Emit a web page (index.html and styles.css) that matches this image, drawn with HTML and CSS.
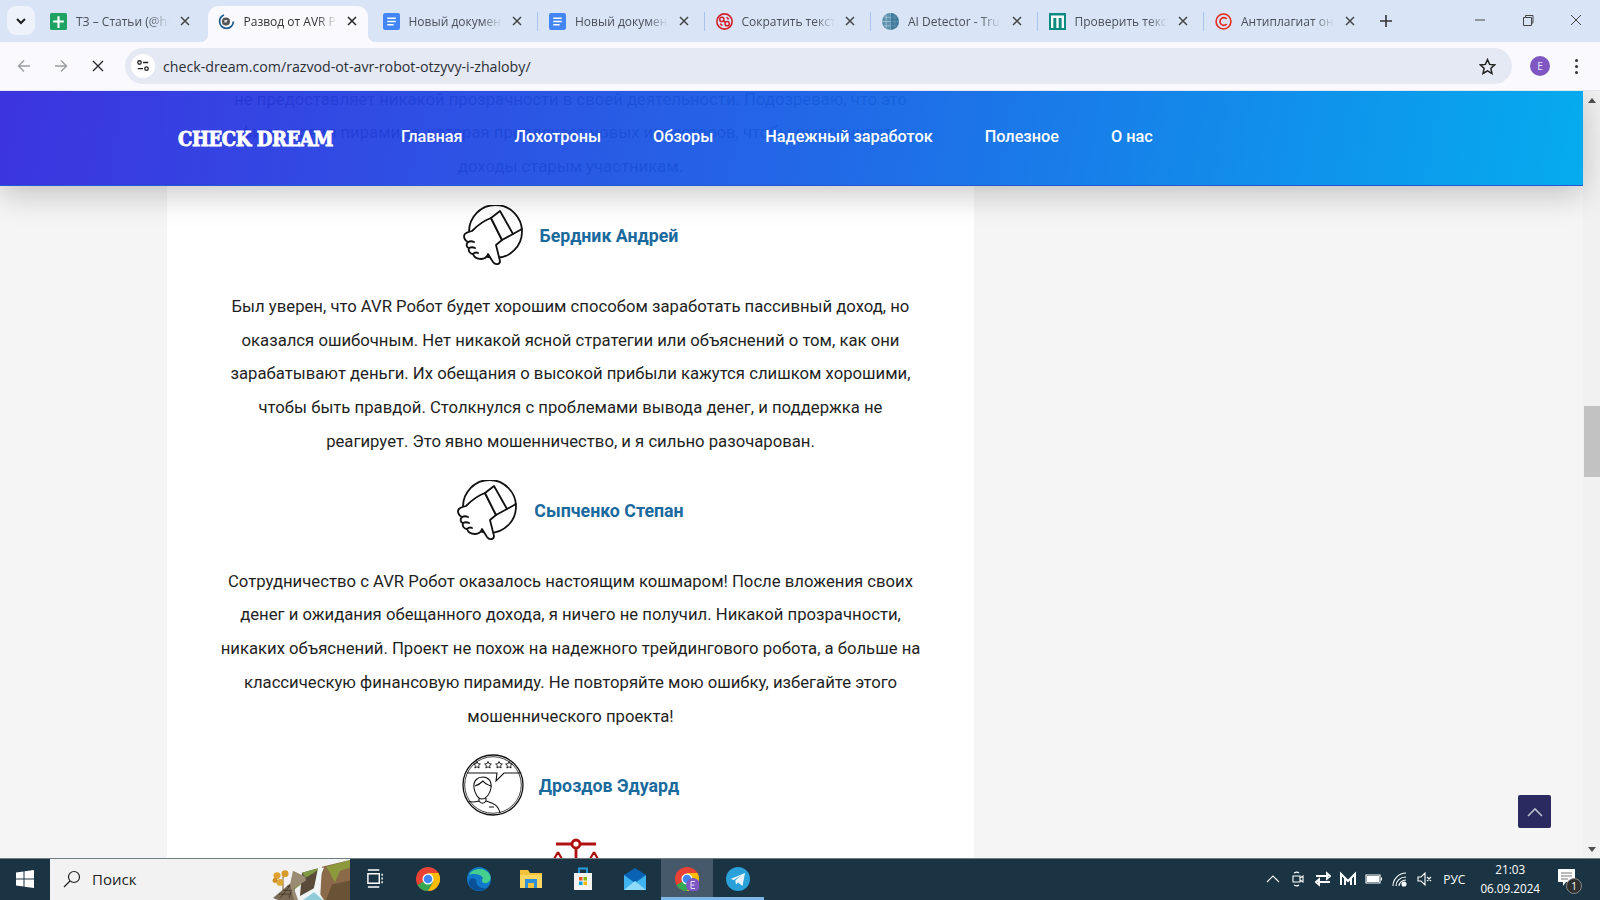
FILE: index.html
```html
<!DOCTYPE html>
<html lang="ru">
<head>
<meta charset="utf-8">
<title>Развод от AVR Робот</title>
<link rel="stylesheet" href="styles.css">
</head>
<body>
<svg class="defs" width="0" height="0" aria-hidden="true">
  <symbol id="thumb" viewBox="0 0 62 62">
    <g fill="none" stroke="#111" stroke-width="1.800" stroke-linecap="round" stroke-linejoin="round">
      <circle cx="32.500" cy="26.500" r="26.500"/>
      <path fill="#fff" d="M28 13C22 15 15 20 9 26 5 27 1 28 1 31 1 34 3 36 5 37 3 39 3 42 6 43 5 46 7 49 10 49 11 52 14 54 18 54 21 54 24 52 25 49L30 57C32 60 37 60 37 56L33 40 39 35Z"/>
      <path fill="#fff" d="M28 13L37 6 50 29 39 35Z"/>
      <path d="M50 29L59 24M5 37C7 36 9 36 11 37M6 43C8 42 10 42 12 43M10 49C11 48 13 47 15 48"/>
    </g>
  </symbol>
  <symbol id="review" viewBox="0 0 62 62">
    <g fill="none" stroke="#111">
      <circle cx="31" cy="31" r="30" stroke-width="1.300"/>
      <circle cx="31" cy="31" r="28.300" stroke-width=".8"/>
      <path stroke-width="1.100" d="M5 19H35L34 27 42 19H58"/>
      <path stroke-width=".9" d="M15 7.500l1 2.200 2.400.3-1.800 1.600.5 2.400-2.100-1.200-2.100 1.200.5-2.400-1.800-1.600 2.400-.3zM26 7.500l1 2.200 2.400.3-1.800 1.600.5 2.400-2.100-1.200-2.100 1.200.5-2.400-1.800-1.600 2.400-.3zM37 7.500l1 2.200 2.400.3-1.800 1.600.5 2.400-2.100-1.200-2.100 1.200.5-2.400-1.800-1.600 2.400-.3zM47 7.500l1 2.200 2.400.3-1.800 1.600.5 2.400-2.100-1.200-2.100 1.200.5-2.400-1.800-1.600 2.400-.3z"/>
      <path stroke-width="1.100" d="M12 34C11 26 16 23 21 23 26 23 30 27 29 34 28 40 24 45 20 45 16 45 13 40 12 34ZM13 32C16 31 19 29 21 27 23 30 26 31 29 32M17 44V47C13 48 10 49 7 47M24 44V47C30 49 36 50 38 59M17 47C19 50 22 50 24 47M27 53H32"/>
    </g>
  </symbol>
</svg>

<header class="tabstrip">
  <button class="tab-list"><svg width="12" height="8" viewBox="0 0 12 8"><path d="M2 2l4 4 4-4" fill="none" stroke="#1c1c1c" stroke-width="2"/></svg></button>
  <div class="tab">
    <svg class="favicon" viewBox="0 0 16 16"><rect width="16" height="16" rx="1.500" fill="#1ea362"/><path d="M7 3h2v4h4v2H9v5H7V9H3V7h4z" fill="#fff"/></svg>
    <span class="tab-title">ТЗ – Статьи (@hea</span>
    <svg class="tab-close" viewBox="0 0 10 10"><path d="M1 1l8 8M9 1L1 9"/></svg>
  </div>
  <div class="tab active">
    <svg class="favicon" viewBox="0 0 16 16"><circle cx="8" cy="8" r="6.500" fill="none" stroke="#1b5a8c" stroke-width="1.600" stroke-dasharray="28 13"/><circle cx="7.500" cy="8" r="3.800" fill="#555"/><path d="M6 6.500l3 0-1 2.500-2 0z" fill="#ddd"/></svg>
    <span class="tab-title">Развод от AVR Робот</span>
    <svg class="tab-close" viewBox="0 0 10 10"><path d="M1 1l8 8M9 1L1 9"/></svg>
  </div>
  <div class="tab sep">
    <svg class="favicon" viewBox="0 0 16 16"><rect width="16" height="16" rx="2" fill="#4285f4"/><path d="M4 5h8M4 8h8M4 11h6" stroke="#fff" stroke-width="1.500"/></svg>
    <span class="tab-title">Новый документ</span>
    <svg class="tab-close" viewBox="0 0 10 10"><path d="M1 1l8 8M9 1L1 9"/></svg>
  </div>
  <div class="tab sep">
    <svg class="favicon" viewBox="0 0 16 16"><rect width="16" height="16" rx="2" fill="#4285f4"/><path d="M4 5h8M4 8h8M4 11h6" stroke="#fff" stroke-width="1.500"/></svg>
    <span class="tab-title">Новый документ</span>
    <svg class="tab-close" viewBox="0 0 10 10"><path d="M1 1l8 8M9 1L1 9"/></svg>
  </div>
  <div class="tab sep">
    <svg class="favicon" viewBox="0 0 16 16"><circle cx="8" cy="8" r="7.200" fill="none" stroke="#d5202a" stroke-width="1.500"/><circle cx="5.500" cy="6" r="2" fill="none" stroke="#d5202a" stroke-width="1.400"/><circle cx="10.500" cy="10" r="2" fill="none" stroke="#d5202a" stroke-width="1.400"/><path d="M7 7.500l2 1M10 4l2 2M4 10l2 2" stroke="#d5202a" stroke-width="1.400"/></svg>
    <span class="tab-title">Сократить текст</span>
    <svg class="tab-close" viewBox="0 0 10 10"><path d="M1 1l8 8M9 1L1 9"/></svg>
  </div>
  <div class="tab sep">
    <svg class="favicon" viewBox="0 0 16 16"><circle cx="8" cy="8" r="8" fill="#5d8fae"/><path d="M8 0v16M4 2v12M12 2v12M0 8h16M2 4h12M2 12h12" stroke="#a9c6d6" stroke-width=".8"/><path d="M8 0a8 8 0 0 1 0 16z" fill="#2f6b8f" opacity=".6"/></svg>
    <span class="tab-title">AI Detector - TruthS</span>
    <svg class="tab-close" viewBox="0 0 10 10"><path d="M1 1l8 8M9 1L1 9"/></svg>
  </div>
  <div class="tab sep">
    <svg class="favicon" viewBox="0 0 16 16"><rect width="16" height="16" fill="#0f8a80"/><path d="M3 14V3.500h10V14M8 3.500V14" fill="none" stroke="#fff" stroke-width="2.200"/></svg>
    <span class="tab-title">Проверить текст</span>
    <svg class="tab-close" viewBox="0 0 10 10"><path d="M1 1l8 8M9 1L1 9"/></svg>
  </div>
  <div class="tab sep">
    <svg class="favicon" viewBox="0 0 16 16"><circle cx="8" cy="8" r="7" fill="none" stroke="#e5291f" stroke-width="1.500"/><path d="M11 5.600A3.600 3.600 0 1 0 11 10.400" fill="none" stroke="#e5291f" stroke-width="1.600"/></svg>
    <span class="tab-title">Антиплагиат онлайн</span>
    <svg class="tab-close" viewBox="0 0 10 10"><path d="M1 1l8 8M9 1L1 9"/></svg>
  </div>
  <svg class="new-tab" viewBox="0 0 12 12"><path d="M6 0v12M0 6h12"/></svg>
  <div class="window-controls">
    <svg viewBox="0 0 12 12"><path d="M1 6h10"/></svg>
    <svg viewBox="0 0 12 12"><path d="M1.500 3.500h8v8h-8zM3.500 3.500V1.500h7.500v7.500H9.500"/></svg>
    <svg viewBox="0 0 12 12"><path d="M1 1l10 10M11 1L1 11"/></svg>
  </div>
</header>

<nav class="toolbar">
  <svg class="tool dim" viewBox="0 0 14 14"><path d="M13 7H1.500M7 1.500L1.500 7 7 12.500"/></svg>
  <svg class="tool dim" viewBox="0 0 14 14"><path d="M1 7h11.500M7 1.500L12.500 7 7 12.500"/></svg>
  <svg class="tool stop" viewBox="0 0 14 14"><path d="M2 2l10 10M12 2L2 12"/></svg>
  <div class="omnibox">
    <span class="site-info"><svg viewBox="0 0 16 16"><circle cx="4" cy="4" r="2"/><path d="M8 4h6M2 11h6"/><circle cx="12" cy="11" r="2"/></svg></span>
    <span class="url">check-dream.com/razvod-ot-avr-robot-otzyvy-i-zhaloby/</span>
    <svg class="star" viewBox="0 0 16 16"><path d="M8 1.500l2 4.500 4.800.5-3.600 3.200 1 4.800L8 12l-4.200 2.500 1-4.800L1.200 6.500 6 6z"/></svg>
  </div>
  <span class="avatar">E</span>
  <span class="menu-dots"><i></i><i></i><i></i></span>
</nav>

<main class="viewport">
  <div class="page">
    <article class="article">
      <p class="review">не предоставляет никакой прозрачности в своей деятельности. Подозреваю, что это<br>финансовая пирамида, которая привлекает новых инвесторов, чтобы выплачивать<br>доходы старым участникам.</p>
      <h3 class="author"><svg class="author-icon"><use href="#thumb"/></svg>Бердник Андрей</h3>
      <p class="review">Был уверен, что AVR Робот будет хорошим способом заработать пассивный доход, но<br>оказался ошибочным. Нет никакой ясной стратегии или объяснений о том, как они<br>зарабатывают деньги. Их обещания о высокой прибыли кажутся слишком хорошими,<br>чтобы быть правдой. Столкнулся с проблемами вывода денег, и поддержка не<br>реагирует. Это явно мошенничество, и я сильно разочарован.</p>
      <h3 class="author"><svg class="author-icon"><use href="#thumb"/></svg>Сыпченко Степан</h3>
      <p class="review">Сотрудничество с AVR Робот оказалось настоящим кошмаром! После вложения своих<br>денег и ожидания обещанного дохода, я ничего не получил. Никакой прозрачности,<br>никаких объяснений. Проект не похож на надежного трейдингового робота, а больше на<br>классическую финансовую пирамиду. Не повторяйте мою ошибку, избегайте этого<br>мошеннического проекта!</p>
      <h3 class="author"><svg class="author-icon"><use href="#review"/></svg>Дроздов Эдуард</h3>
      <svg class="scales" viewBox="0 0 48 40"><g fill="none" stroke="#b01212" stroke-width="2.800"><path d="M4 6h40M24 10v30"/><path d="M6 14L1 23M6 14l5 9M42 14l-5 9M42 14l5 9" stroke-width="2.200"/><circle cx="24" cy="6" r="4" fill="#fff"/></g></svg>
    </article>
  </div>
  <div class="scrollbar">
    <span class="arrow up"></span>
    <span class="thumb"></span>
    <span class="arrow down"></span>
  </div>
  <div class="site-header">
    <span class="logo">CHECK DREAM</span>
    <ul class="site-nav">
      <li>Главная</li><li>Лохотроны</li><li>Обзоры</li><li>Надежный заработок</li><li>Полезное</li><li>О нас</li>
    </ul>
  </div>
  <a class="to-top"><svg viewBox="0 0 16 10"><path d="M1 9l7-7 7 7"/></svg></a>
</main>

<footer class="taskbar">
  <span class="start"><svg viewBox="0 0 18 18"><path d="M0 2.500L7.500 1.400V8.500H0zM8.500 1.300L18 0V8.500H8.500zM0 9.500H7.500V16.600L0 15.500zM8.500 9.500H18V18L8.500 16.700z" fill="#fff"/></svg></span>
  <div class="search">
    <svg class="lens" viewBox="0 0 18 18"><circle cx="11" cy="7" r="5.500"/><path d="M7 11l-6 6"/></svg>
    <span class="search-text">Поиск</span>
    <svg class="search-art" viewBox="0 0 80 42" preserveAspectRatio="none">
      <path d="M52 8L80 1V42H50z" fill="#8a6a48"/>
      <path d="M56 8L80 1V9L70 12 65 24 60 14z" fill="#8c9a3c"/>
      <path d="M56 42L62 26 80 22V42z" fill="#6a5236"/>
      <path d="M32 14L50 9 44 30 30 38z" fill="#5a4a3a"/>
      <path d="M32 14L50 9 44 14 36 19z" fill="#7f9a42"/>
      <path d="M48 9L54 9 46 28 48 33 54 42H34L44 30z" fill="#eef6f7"/>
      <path d="M33 42L44 34 53 42z" fill="#8fcbd8"/>
      <path d="M18 28L26 20 31 26 22 33z" fill="#7d9a3e"/>
      <path d="M3 40L20 25 25 28 24 42H8z" fill="#7a6a55"/>
      <path d="M10 40L21 26M19 40L23 27M9 36h12M13 32h9M17 28h6" stroke="#3f3223" stroke-width=".8" fill="none"/>
      <path d="M23 12L35 18 36 22 24 30 28 42H24L20 26z" fill="#9a8b75"/>
      <path d="M13 18v14" stroke="#7a5a28" stroke-width="1"/>
      <circle cx="7" cy="17" r="3.500" fill="#e0a030"/><circle cx="15" cy="15" r="3.500" fill="#d99a2a"/><circle cx="10" cy="24" r="3.500" fill="#e0a838"/><circle cx="5" cy="22" r="2.500" fill="#cf8e22"/>
    </svg>
  </div>
  <div class="task-icons">
    <span class="task"><svg viewBox="0 0 20 20"><path d="M2 1h12M2 19h12M2 5h12v10H2z" fill="none" stroke="#fff" stroke-width="1.500"/><path d="M17 5v2M17 9v2M17 13v2" stroke="#fff" stroke-width="1.500"/></svg></span>
    <span class="task"><svg class="big" viewBox="0 0 24 24"><circle cx="12" cy="12" r="12" fill="#ea4335"/><path d="M12 12L1.600 18A12 12 0 0 0 12 24L22.400 6H12z" fill="#34a853"/><path d="M12 24A12 12 0 0 0 22.400 6H12l5.200 9z" fill="#fbbc05"/><circle cx="12" cy="12" r="5.500" fill="#fff"/><circle cx="12" cy="12" r="4.300" fill="#4285f4"/></svg></span>
    <span class="task"><svg class="big" viewBox="0 0 24 24"><circle cx="12" cy="12" r="12" fill="#0f78c8"/><path d="M2 8C5 1 18-1 23 8c2 5-2 9-6 8-3-1-2-4-1-5C14 7 6 6 2 8z" fill="#45cf8f"/><path d="M9 13c0 6 5 9 10 8-3 3-13 5-17-4-1-4 3-8 7-4z" fill="#0b4f96"/></svg></span>
    <span class="task"><svg class="big" viewBox="0 0 24 24"><path d="M1 3h8l2 3h12v15H1z" fill="#f5c33b"/><path d="M1 8h22v13H1z" fill="#fbd660"/><path d="M6 12h12v9H6z" fill="#2e8fd8"/><path d="M9 16h6v5H9z" fill="#f5c33b"/></svg></span>
    <span class="task"><svg class="big" viewBox="0 0 24 24"><path d="M3 6h18v17H3z" fill="#f4f4f4"/><path d="M8 6V1.500h8V6" fill="none" stroke="#2a9de0" stroke-width="1.800"/><path d="M8 10h3.500v3.500H8z" fill="#f25022"/><path d="M12.500 10H16v3.500h-3.500z" fill="#7fba00"/><path d="M8 14.500h3.500V18H8z" fill="#00a4ef"/><path d="M12.500 14.500H16V18h-3.500z" fill="#ffb900"/></svg></span>
    <span class="task"><svg class="big" viewBox="0 0 24 24"><path d="M1 8h22v15H1z" fill="#3fb4ee"/><path d="M1 8l11-7 11 7-11 8z" fill="#0a62b4"/><path d="M1 23l11-9 11 9z" fill="#8fdcfa"/></svg></span>
    <span class="task running active"><svg class="big" viewBox="0 0 24 24"><circle cx="12" cy="12" r="12" fill="#ea4335"/><path d="M12 12L1.600 18A12 12 0 0 0 12 24L22.400 6H12z" fill="#34a853"/><path d="M12 24A12 12 0 0 0 22.400 6H12l5.200 9z" fill="#fbbc05"/><circle cx="12" cy="12" r="5.500" fill="#fff"/><circle cx="12" cy="12" r="4.300" fill="#4285f4"/><circle cx="18" cy="18" r="7" fill="#7e57c2"/><path d="M16 14.500h4M16 18h3.500M16 21.500h4M16 14.500v7" stroke="#e8dcff" stroke-width="1" fill="none"/></svg></span>
    <span class="task running"><svg class="big" viewBox="0 0 24 24"><circle cx="12" cy="12" r="12" fill="#2aa1da"/><path d="M4.500 12L19 6l-2.500 13-4.500-3.500-2 2-.7-4 6.200-5.500L8 13z" fill="#e9f5fb"/></svg></span>
  </div>
  <div class="tray">
    <svg class="tray-icon" viewBox="0 0 16 16"><path d="M2 11l6-6 6 6"/></svg>
    <svg class="tray-icon" viewBox="0 0 16 16"><path d="M3 5h7v6H3zM10 7l3-2v6l-3-2M4 2c2-1 4-1 5 0M4 14c2 1 4 1 5 0"/></svg>
    <svg class="tray-icon fat" viewBox="0 0 16 16"><path d="M1 5h12M15 5l-3-2.500v5zM15 11H3M1 11l3-2.500v5z"/></svg>
    <svg class="tray-icon fat" viewBox="0 0 16 16"><path d="M1 14V3l7 7 7-7v11M5 14V7M11 14V7"/></svg>
    <svg class="tray-icon wide" viewBox="0 0 18 12"><path d="M1 2h14v8H1zM16.500 4.500v3"/><path d="M2.500 3.500h11v5h-11z" fill="#fff"/></svg>
    <svg class="tray-icon" viewBox="0 0 16 16"><path d="M1 15C1 8 7 2 14 2M4 15c0-5 4-9 10-9M7 15c0-3 3-6 7-6"/><circle cx="12" cy="13" r="2" fill="#fff"/></svg>
    <svg class="tray-icon" viewBox="0 0 16 16"><path d="M1 6h3l4-4v12l-4-4H1zM10 6l4 4M14 6l-4 4"/></svg>
    <span class="lang">РУС</span>
    <span class="clock"><span>21:03</span><span>06.09.2024</span></span>
    <span class="notify"><svg viewBox="0 0 20 20"><path d="M1 1h17v13H9l-3 4v-4H1z" fill="#fff"/><path d="M4 5h11M4 8h11M4 11h7" stroke="#777" stroke-width="1"/></svg><b>1</b></span>
  </div>
</footer>
</body>
</html>
```
FILE: styles.css
```css
* { box-sizing: border-box; }
html, body { margin: 0; height: 100%; }
body {
  display: flex;
  flex-direction: column;
  height: 900px;
  overflow: hidden;
  font-family: Roboto, "Noto Sans", sans-serif;
  background: #f5f5f5;
}
.defs { position: absolute; }

/* tab strip */
.tabstrip {
  height: 42px;
  flex: none;
  display: flex;
  align-items: flex-start;
  padding: 6px 0 0 7px;
  background: #d9e5f7;
  font-family: "Open Sans", "Noto Sans", sans-serif;
}
.tab-list {
  width: 28px;
  height: 29px;
  margin-right: 3px;
  border: 0;
  padding: 0;
  border-radius: 9px;
  background: #edf2fb;
  display: flex;
  align-items: center;
  justify-content: center;
}
.tab {
  position: relative;
  width: 166.500px;
  height: 36px;
  padding: 0 15px 6px 12px;
  display: flex;
  align-items: center;
  flex: none;
}
.tab.sep::before {
  content: "";
  position: absolute;
  left: 0;
  top: 6px;
  height: 19px;
  width: 1px;
  background: #a9c4ee;
}
.tab.active + .tab.sep::before { display: none; }
.tab.active {
  width: 160px;
  margin: 0 3px;
  padding-left: 10px;
  padding-right: 11px;
  background: #f9f9fe;
  border-radius: 11px 11px 0 0;
}
.tab.active::before, .tab.active::after {
  content: "";
  position: absolute;
  bottom: 0;
  width: 8px;
  height: 8px;
}
.tab.active::before { left: -8px; background: radial-gradient(circle at 0 0, transparent 8px, #f9f9fe 8.500px); }
.tab.active::after { right: -8px; background: radial-gradient(circle at 100% 0, transparent 8px, #f9f9fe 8.500px); }
.favicon { width: 17px; height: 17px; flex: none; }
.tab-title {
  margin-left: 9px;
  width: 93px;
  font-size: 12px;
  color: #4a4f57;
  white-space: nowrap;
  overflow: hidden;
  -webkit-mask-image: linear-gradient(90deg, #000 78%, transparent 100%);
  mask-image: linear-gradient(90deg, #000 78%, transparent 100%);
}
.active .tab-title { color: #333; }
.tab-close {
  width: 10px;
  height: 10px;
  margin-left: auto;
  fill: none;
  stroke: #444;
  stroke-width: 1.500;
}
.active .tab-close { stroke: #222; }
.new-tab {
  width: 12px;
  height: 12px;
  margin: 9px 0 0 10px;
  fill: none;
  stroke: #333;
  stroke-width: 1.600;
}
.window-controls {
  margin-left: auto;
  margin-top: 8px;
  display: flex;
  gap: 36px;
  padding-right: 18px;
}
.window-controls svg {
  width: 12px;
  height: 12px;
  fill: none;
  stroke: #444;
  stroke-width: 1;
}

/* toolbar */
.toolbar {
  height: 49px;
  flex: none;
  display: flex;
  align-items: center;
  padding: 0 0 0 17px;
  background: #f9f9fe;
  font-family: "Open Sans", "Noto Sans", sans-serif;
  border-bottom: 1px solid #e7e8ef;
}
.tool {
  width: 14px;
  height: 14px;
  margin-right: 23px;
  fill: none;
  stroke-width: 1.400;
  stroke: #9a9da3;
}
.tool.stop { stroke: #2b2b2b; margin-right: 20px; margin-left: 0; }
.omnibox {
  width: 1387px;
  height: 36px;
  border-radius: 18px;
  background: #e5e9f3;
  display: flex;
  align-items: center;
  padding: 0 16px 0 6px;
}
.site-info {
  width: 24px;
  height: 24px;
  border-radius: 50%;
  background: #fff;
  display: flex;
  align-items: center;
  justify-content: center;
}
.site-info svg { width: 14px; height: 14px; fill: none; stroke: #222; stroke-width: 1.500; }
.url { margin-left: 8px; font-size: 14.200px; color: #2b2f36; }
.star { width: 17px; height: 17px; margin-left: auto; fill: none; stroke: #222; stroke-width: 1.400; }
.avatar {
  width: 20px;
  height: 20px;
  margin-left: 18px;
  border-radius: 50%;
  background: #7e57c2;
  color: #ece4ff;
  font-size: 10px;
  line-height: 20px;
  text-align: center;
}
.menu-dots {
  margin-left: 25px;
  display: flex;
  flex-direction: column;
  gap: 3px;
}
.menu-dots i { width: 3px; height: 3px; border-radius: 50%; background: #333; }

/* page */
.viewport {
  position: relative;
  flex: 1;
  min-height: 0;
  display: flex;
  overflow: hidden;
}
.page {
  flex: 1;
  padding-left: 167px;
  overflow: hidden;
  background: #f5f5f5;
}
.article {
  width: 807px;
  margin-top: -8.500px;
  padding-bottom: 40px;
  background: #fff;
  text-align: center;
}
.review {
  margin: 0;
  font-size: 16.700px;
  line-height: 33.750px;
  color: #1f1f1f;
}
.author {
  margin: 21px 0 23px;
  display: flex;
  align-items: center;
  justify-content: center;
  gap: 15px;
  font-size: 17.800px;
  font-weight: 700;
  color: #1a6a9e;
}
.author-icon { width: 62px; height: 62px; }
.scales { display: block; width: 48px; height: 40px; margin: -1px 0 0 385px; }

.scrollbar {
  width: 17px;
  flex: none;
  background: #f1f1f1;
  display: flex;
  flex-direction: column;
  align-items: flex-end;
}
.arrow { width: 0; height: 0; border: 4px solid transparent; margin-right: 4px; }
.arrow.up { border-bottom: 5px solid #505050; border-top: 0; margin-top: 7px; }
.arrow.down { border-top: 5px solid #505050; border-bottom: 0; margin-top: auto; margin-bottom: 6px; }
.thumb { width: 16px; height: 71px; margin-top: 303px; background: #c2c2c2; }

.site-header {
  position: absolute;
  left: 0;
  top: 0;
  width: 1583px;
  height: 95px;
  padding: 0 0 4px 178px;
  display: flex;
  align-items: center;
  background: linear-gradient(100deg, rgba(48, 40, 222, .94) 0%, rgba(20, 100, 230, .95) 55%, rgba(0, 170, 238, .98) 100%);
  border-bottom: 1px solid #2358cf;
  box-shadow: 0 8px 30px rgba(0, 0, 0, .22);
}
.logo {
  width: 223px;
  margin-top: 6px;
  font-family: "DejaVu Serif", serif;
  font-stretch: condensed;
  font-size: 20px;
  font-weight: 700;
  letter-spacing: -.4px;
  color: #fff;
  -webkit-text-stroke: .8px #fff;
  white-space: nowrap;
}
.site-nav {
  list-style: none;
  margin: 0;
  padding: 0;
  display: flex;
  gap: 52px;
  font-size: 16.300px;
  font-weight: 500;
  color: #fff;
}
.to-top {
  position: absolute;
  left: 1518px;
  top: 704px;
  width: 33px;
  height: 33px;
  border-radius: 2px;
  background: #2a2a60;
  display: flex;
  align-items: center;
  justify-content: center;
}
.to-top svg { width: 16px; height: 10px; fill: none; stroke: #b9bcc9; stroke-width: 1.600; }

/* taskbar */
.taskbar {
  height: 42px;
  flex: none;
  display: flex;
  background: #1b3443;
  border-top: 1px solid #6f7c84;
  color: #fff;
  font-family: "Open Sans", "Noto Sans", sans-serif;
}
.start { width: 50px; display: flex; align-items: center; justify-content: center; padding-bottom: 1px; }
.start svg { width: 18px; height: 18px; }
.search {
  width: 300px;
  background: #f2f2f2;
  display: flex;
  align-items: center;
  padding-left: 13px;
  padding-bottom: 1px;
  color: #222;
}
.lens { width: 18px; height: 18px; fill: none; stroke: #222; stroke-width: 1.200; }
.search-text { margin-left: 11px; font-size: 15px; }
.search-art { width: 80px; height: 41px; margin-left: auto; margin-bottom: -1px; }
.task-icons { display: flex; margin-left: 0; padding-left: 0; }
.task {
  width: 51.800px;
  height: 41px;
  padding-bottom: 2px;
  display: flex;
  align-items: center;
  justify-content: center;
}
.task svg { width: 19px; height: 19px; }
.task svg.big { width: 24px; height: 24px; }
.task.active { background: #46596a; box-shadow: inset 0 -3px 0 #7db7e8; }
.task.running:not(.active) { box-shadow: inset 0 -3px 0 #7db7e8; }
.tray { margin-left: auto; display: flex; align-items: center; padding-bottom: 1px; }
.tray-icon {
  width: 16px;
  height: 16px;
  margin-right: 9px;
  fill: none;
  stroke: #fff;
  stroke-width: 1.100;
}
.tray-icon.fat { stroke-width: 2; }
.tray-icon.wide { width: 18px; height: 12px; }
.lang { font-size: 12px; margin-left: 1px; }
.clock {
  display: flex;
  flex-direction: column;
  align-items: center;
  margin-left: 15px;
  font-size: 11.700px;
  line-height: 19px;
}
.notify { position: relative; width: 22px; height: 22px; margin: 0 21px 0 17px; }
.notify svg { width: 20px; height: 20px; }
.notify b {
  position: absolute;
  right: -3px;
  bottom: -4px;
  width: 16px;
  height: 16px;
  border-radius: 50%;
  background: #2f2f2f;
  border: 1px solid #888;
  font-size: 10px;
  font-weight: 400;
  line-height: 14px;
  text-align: center;
}
```
